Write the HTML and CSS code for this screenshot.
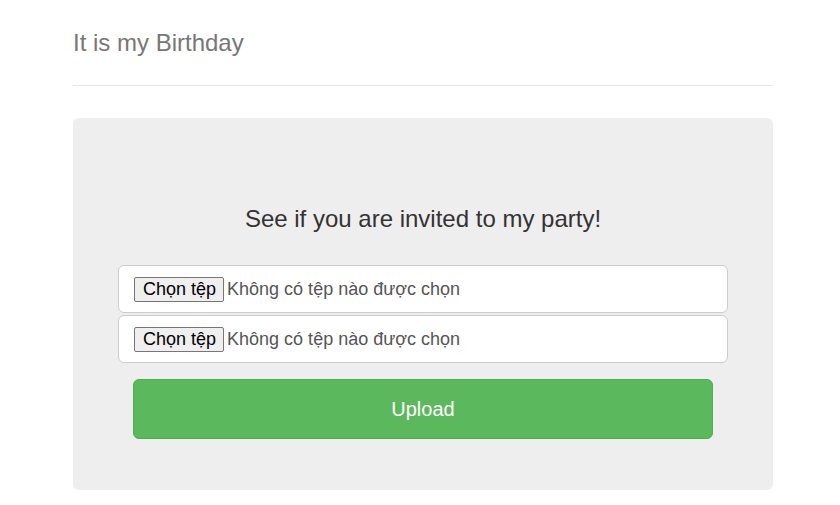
FILE: index.html
```html
<!DOCTYPE html>
<html lang="vi">
<head>
<meta charset="utf-8">
<title>It is my Birthday</title>
<link rel="stylesheet" href="styles.css">
</head>
<body>
<div class="container">
  <div class="header">
    <h3 class="muted">It is my Birthday</h3>
  </div>
  <div class="jumbotron">
    <h3 class="lead">See if you are invited to my party!</h3>
    <form class="form">
      <label class="file-input">
        <span class="file-btn">Chọn tệp</span>
        <span class="file-name">Không có tệp nào được chọn</span>
      </label>
      <label class="file-input">
        <span class="file-btn">Chọn tệp</span>
        <span class="file-name">Không có tệp nào được chọn</span>
      </label>
      <button type="button" class="btn-upload">Upload</button>
    </form>
  </div>
</div>
</body>
</html>
```

FILE: styles.css
```css
html, body {
  margin: 0;
  padding: 0;
  background: #fff;
}
body {
  font-family: "Liberation Sans", Arial, sans-serif;
  color: #333;
}
.container {
  width: 700px;
  margin-left: 73px;
}
.header {
  padding-top: 30px;
  padding-bottom: 29px;
  border-bottom: 1px solid #e5e5e5;
}
.muted {
  margin: 0;
  font-size: 24px;
  font-weight: 400;
  line-height: 26px;
  color: #777;
}
.jumbotron {
  margin-top: 32px;
  background: #eee;
  border-radius: 6px;
  padding: 88px 45px 52px 45px;
  height: 372px;
  box-sizing: border-box;
}
.lead {
  margin: 0;
  text-align: center;
  font-size: 24px;
  font-weight: 400;
  line-height: 26px;
  color: #333;
}
.form {
  margin-top: 33px;
  display: flex;
  flex-direction: column;
}
.file-input {
  display: flex;
  align-items: center;
  height: 48px;
  box-sizing: border-box;
  background: #fff;
  border: 1px solid #ccc;
  border-radius: 6px;
  padding: 1px 15px 0;
  font-size: 18px;
}
.file-input + .file-input {
  margin-top: 2px;
}
.file-btn {
  display: inline-block;
  height: 25px;
  line-height: 23px;
  box-sizing: border-box;
  padding: 0 7px 0 8px;
  border: 1px solid #767676;
  border-radius: 2px;
  background: #efefef;
  color: #000;
  font-size: 18px;
}
.file-name {
  margin-left: 3px;
  color: #555;
  line-height: 25px;
}
.btn-upload {
  margin: 16px 15px 0;
  height: 60px;
  border: 1px solid #4cae4c;
  border-radius: 6px;
  background: #5cb85c;
  color: #fff;
  font-family: "Liberation Sans", Arial, sans-serif;
  font-size: 20px;
}
```
